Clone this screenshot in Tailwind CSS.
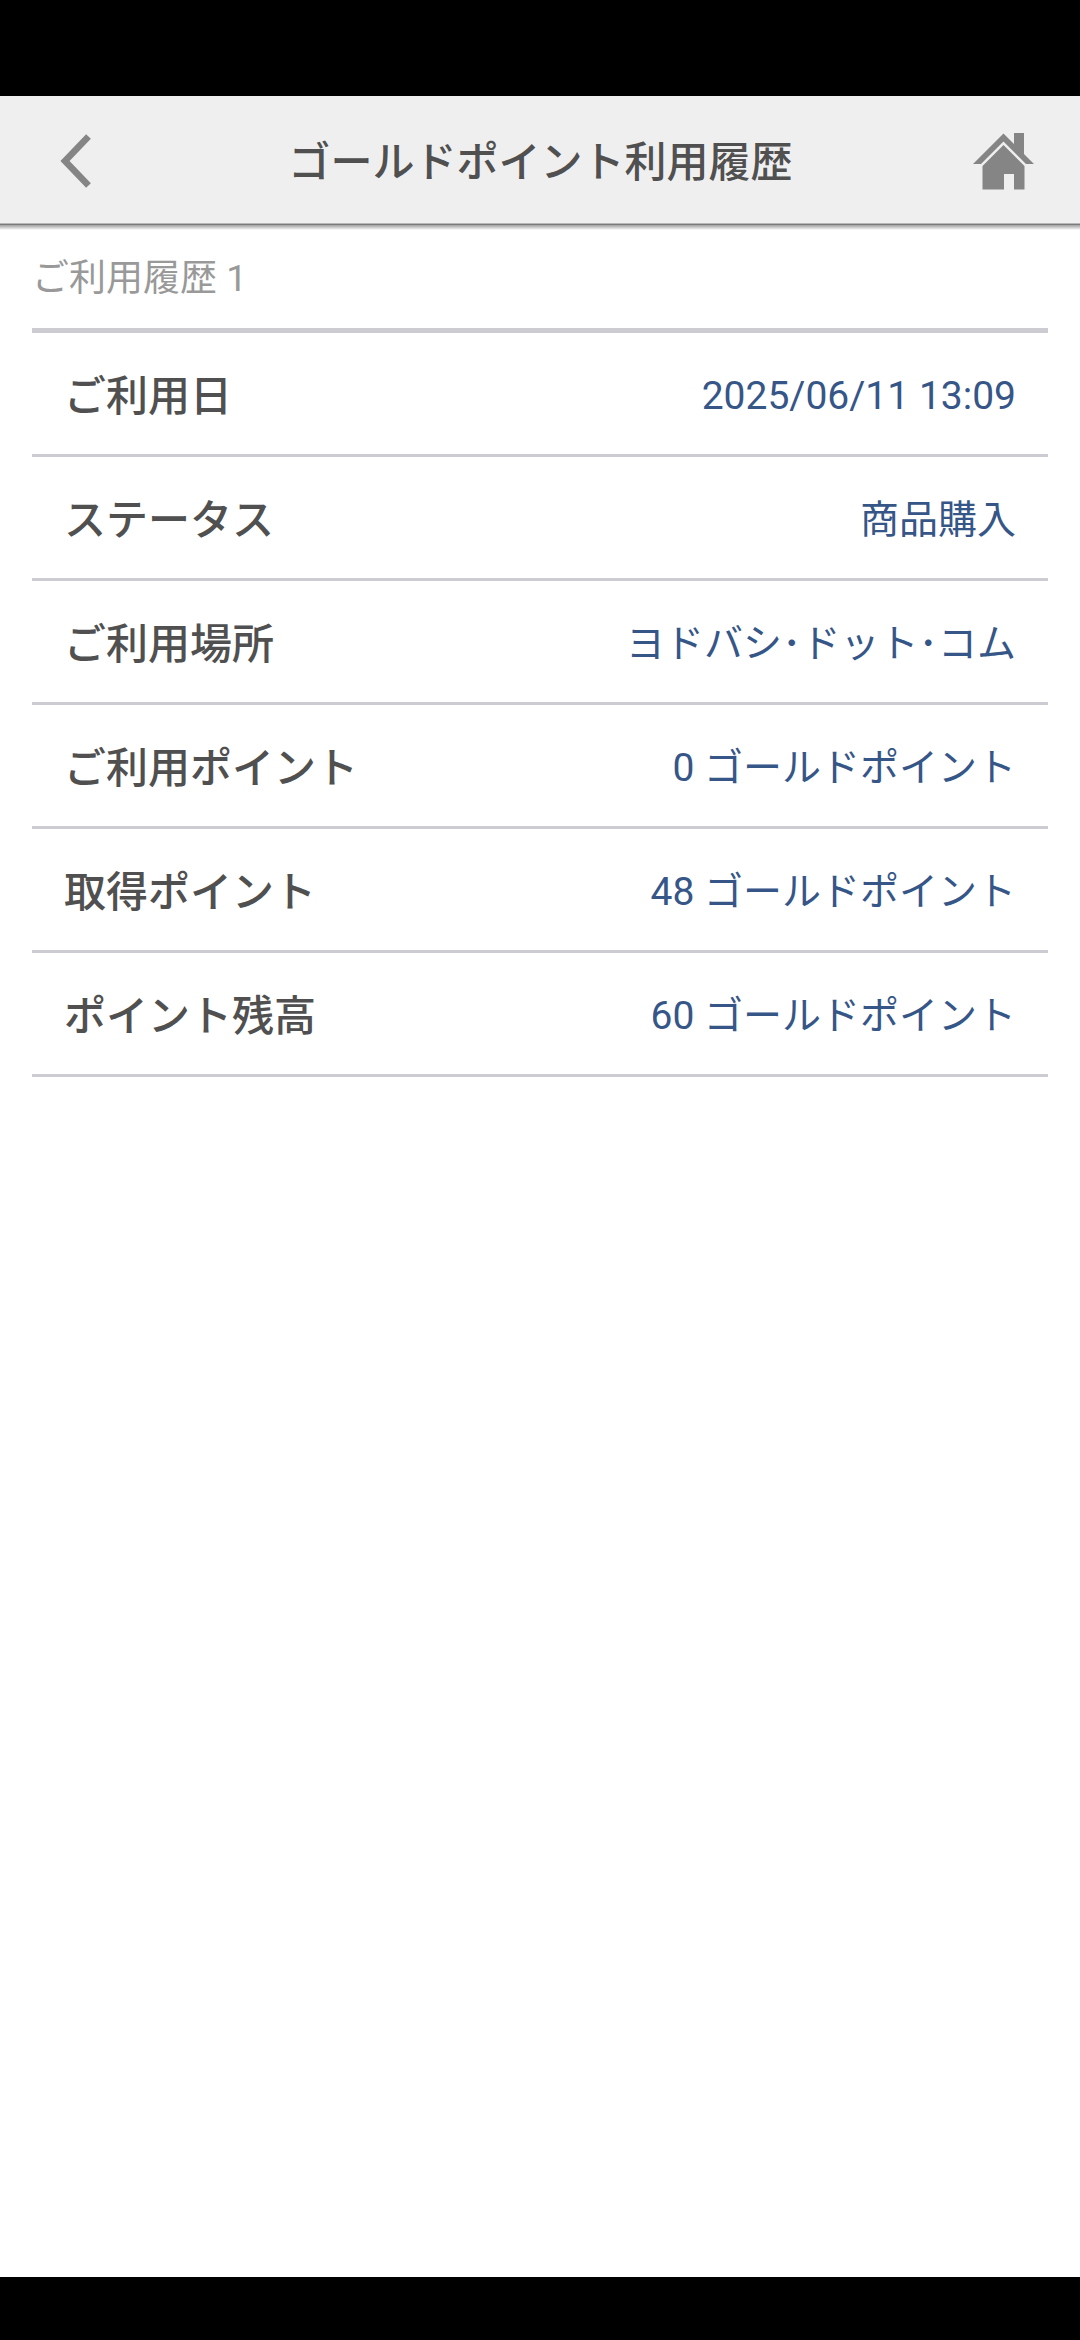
<!DOCTYPE html>
<html lang="ja">
<head>
  <meta charset="UTF-8">
  <meta name="viewport" content="width=device-width, initial-scale=1.0">
  <title>ゴールドポイント利用履歴</title>
  <script src="https://cdn.jsdelivr.net/npm/@tailwindcss/browser@4"></script>
</head>
<body class="bg-black font-[Roboto,'Noto_Sans_CJK_JP',sans-serif]">

  <div class="flex flex-col w-[1080px] h-[2340px] pt-24 pb-[63px]">

    <!-- Header -->
    <header class="flex items-center justify-between h-[127px] shrink-0 bg-[#efefef] pt-[2px] pl-[60px] pr-[46px]">
      <svg class="w-[31px] h-[54px]" viewBox="0 0 31 54" fill="none" stroke="#858585" stroke-width="6.6">
        <path d="M28.500 2.500L5 27L28.500 51.500"/>
      </svg>
      <h1 class="flex-1 pt-1 pl-[17px] text-center text-[42px] leading-[60px] font-medium text-[#505050]">ゴールドポイント利用履歴</h1>
      <svg class="w-[61px] h-[57px] mt-[2px]" viewBox="0 0 61 57" fill="#858585">
        <path d="M0 31L30.500 0.500L41 11V0H51V21L61 31H53L30.500 8.500L8 31Z"/>
        <path d="M9.500 33L30.500 12L51.500 33V56.500H41V41H31V56.500H9.500Z"/>
      </svg>
    </header>

    <main class="grow bg-white">
      <!-- Header shadow -->
      <div class="h-px bg-[#b8b8b8]"></div>
      <div class="h-px bg-[#7c7c7c]"></div>
      <div class="h-[5px] bg-linear-to-b from-[#a0a0a0] to-white"></div>

      <p class="h-[98px] px-8 pt-[22px] text-[37px] leading-[54px] text-[#999999]">ご利用履歴 1</p>

      <dl class="mx-8 border-t-[5px] border-[#cdccd2]">
        <div class="flex items-center justify-between h-[124px] px-8 pt-[5px] border-b-[3px] border-[#cdccd2]">
          <dt class="text-[42px] font-medium text-[#505050]">ご利用日</dt>
          <dd class="text-[39px] text-[#365688]">2025/06/11 13:09</dd>
        </div>
        <div class="flex items-center justify-between h-[124px] px-8 pt-[5px] border-b-[3px] border-[#cdccd2]">
          <dt class="text-[42px] font-medium text-[#505050]">ステータス</dt>
          <dd class="text-[39px] text-[#365688]">商品購入</dd>
        </div>
        <div class="flex items-center justify-between h-[124px] px-8 pt-[5px] border-b-[3px] border-[#cdccd2]">
          <dt class="text-[42px] font-medium text-[#505050]">ご利用場所</dt>
          <dd class="text-[39px] text-[#365688]">ヨドバシ･ドット･コム</dd>
        </div>
        <div class="flex items-center justify-between h-[124px] px-8 pt-[5px] border-b-[3px] border-[#cdccd2]">
          <dt class="text-[42px] font-medium text-[#505050]">ご利用ポイント</dt>
          <dd class="text-[39px] text-[#365688]">0 ゴールドポイント</dd>
        </div>
        <div class="flex items-center justify-between h-[124px] px-8 pt-[5px] border-b-[3px] border-[#cdccd2]">
          <dt class="text-[42px] font-medium text-[#505050]">取得ポイント</dt>
          <dd class="text-[39px] text-[#365688]">48 ゴールドポイント</dd>
        </div>
        <div class="flex items-center justify-between h-[124px] px-8 pt-[5px] border-b-[3px] border-[#cdccd2]">
          <dt class="text-[42px] font-medium text-[#505050]">ポイント残高</dt>
          <dd class="text-[39px] text-[#365688]">60 ゴールドポイント</dd>
        </div>
      </dl>
    </main>

  </div>

</body>
</html>
